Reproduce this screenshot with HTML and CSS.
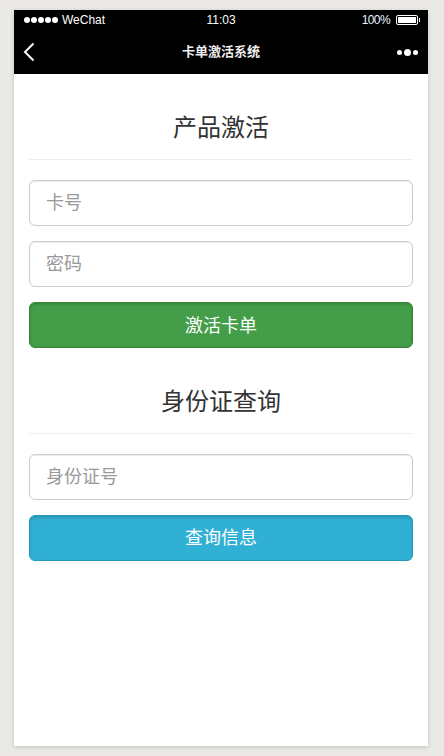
FILE: index.html
```html
<!DOCTYPE html>
<html lang="zh-CN">
<head>
    <meta charset="UTF-8">
    <meta name="viewport" content="width=device-width, initial-scale=1.0">
    <title>卡单激活系统</title>
    <link rel="stylesheet" href="styles.css">
</head>
<body>
    <div class="phone">
        <div class="status-bar">
            <div class="status-left">
                <span class="signal">
                    <span class="signal-dot"></span>
                    <span class="signal-dot"></span>
                    <span class="signal-dot"></span>
                    <span class="signal-dot"></span>
                    <span class="signal-dot"></span>
                </span>
                WeChat
            </div>
            <div class="status-time">11:03</div>
            <div class="status-right">
                <span class="battery-text">100%</span>
                <span class="battery"><span class="battery-fill"></span></span>
            </div>
        </div>
        <div class="nav-bar">
            <svg class="back-icon" width="12" height="20" viewBox="0 0 12 20">
                <path d="M10.5 1.5 L2 10 L10.5 18.5" fill="none" stroke="#fff" stroke-width="2"/>
            </svg>
            <div class="nav-title">卡单激活系统</div>
            <div class="more-icon">
                <span class="dot"></span>
                <span class="dot dot-big"></span>
                <span class="dot"></span>
            </div>
        </div>
        <div class="content">
            <h2 class="section-title">产品激活</h2>
            <div class="form">
                <input class="field" type="text" placeholder="卡号">
                <input class="field" type="text" placeholder="密码">
                <button class="btn btn-green">激活卡单</button>
            </div>
            <h2 class="section-title">身份证查询</h2>
            <div class="form">
                <input class="field" type="text" placeholder="身份证号">
                <button class="btn btn-blue">查询信息</button>
            </div>
        </div>
    </div>
</body>
</html>
```

FILE: styles.css
```css
* {
    margin: 0;
    padding: 0;
    box-sizing: border-box;
}

html, body {
    height: 100%;
    overflow: hidden;
}

body {
    background-color: #ebe9e5;
    font-family: "Liberation Sans", "Noto Sans CJK SC", sans-serif;
    padding: 10px 16px 10px 14px;
}

.phone {
    width: 414px;
    height: 736px;
    background-color: #fff;
    box-shadow: 0 1px 4px rgba(120, 120, 105, 0.35);
    display: flex;
    flex-direction: column;
}

.status-bar {
    height: 20px;
    background-color: #000;
    color: #fff;
    font-size: 12px;
    display: flex;
    align-items: center;
    justify-content: space-between;
    padding: 0 9px 0 10px;
    position: relative;
}

.status-left {
    display: flex;
    align-items: center;
    gap: 4px;
}

.signal {
    display: flex;
    gap: 1px;
}

.signal-dot {
    width: 6px;
    height: 6px;
    border-radius: 50%;
    background-color: #fff;
}

.status-time {
    position: absolute;
    left: 0;
    right: 0;
    text-align: center;
}

.status-right {
    display: flex;
    align-items: center;
    gap: 6px;
    position: relative;
}

.battery-text {
    font-size: 12px;
    letter-spacing: -0.6px;
    color: #e8f6ff;
}

.battery {
    width: 22px;
    height: 10px;
    border: 1px solid #fff;
    border-radius: 2px;
    padding: 1px;
    display: block;
    position: relative;
    margin-right: 1px;
}

.battery::after {
    content: '';
    position: absolute;
    right: -3px;
    top: 2px;
    width: 1px;
    height: 4px;
    background-color: #fff;
}

.battery-fill {
    display: block;
    height: 100%;
    background-color: #fff;
}

.nav-bar {
    height: 44px;
    background-color: #000;
    color: #fff;
    display: flex;
    align-items: center;
    justify-content: space-between;
    padding: 0 10px 0 9px;
    position: relative;
}

.nav-title {
    position: absolute;
    left: 0;
    right: 0;
    top: 11px;
    text-align: center;
    font-size: 13px;
    font-weight: 700;
    color: #eee;
}

.more-icon {
    display: flex;
    align-items: center;
    gap: 2px;
}

.dot {
    width: 5px;
    height: 5px;
    border-radius: 50%;
    background-color: #fff;
}

.dot-big {
    width: 7px;
    height: 7px;
}

.content {
    flex-grow: 1;
    padding: 0 15px;
}

.section-title {
    padding: 30px 0 7px;
    margin-bottom: 20px;
    font-size: 24px;
    line-height: 48px;
    font-weight: 400;
    text-align: center;
    color: #333;
    border-bottom: 1px solid #eee;
}

.form {
    display: flex;
    flex-direction: column;
    gap: 15px;
}

.field {
    height: 46px;
    width: 100%;
    padding: 0 16px;
    border: 1px solid #ccc;
    border-radius: 6px;
    box-shadow: inset 0 1px 1px rgba(0, 0, 0, 0.075);
    font-family: inherit;
    font-size: 18px;
    color: #555;
    outline: none;
}

.field::placeholder {
    color: #999;
    opacity: 1;
}

.btn {
    height: 46px;
    width: 100%;
    border: 1px solid;
    border-radius: 6px;
    font-family: inherit;
    font-size: 18px;
    color: #fff;
}

.btn-green {
    padding-bottom: 2px;
    background-color: #449d48;
    border-color: #398439;
    box-shadow: inset 0 1px 3px rgba(0, 0, 0, 0.2);
}

.btn-blue {
    padding-bottom: 4px;
    background-color: #31b0d5;
    border-color: #269abc;
    box-shadow: inset 0 2px 3px rgba(0, 0, 0, 0.15);
}
```
